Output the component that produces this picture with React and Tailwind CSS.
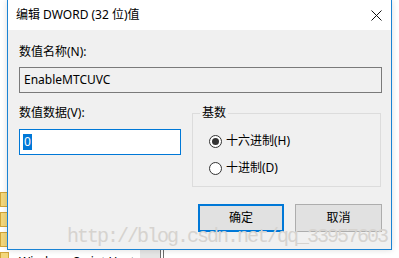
import React from "react";

const ui = "font-['Noto_Sans','Noto_Sans_CJK_SC',sans-serif]";

const Folder = () => (
  <div className="h-[15px] w-[9px] border border-[#d2a63a] bg-[#f3d77c]" />
);

const Radio = ({ checked, label }) => (
  <div className="flex h-[16px] items-center">
    <span className="flex h-[13px] w-[13px] items-center justify-center rounded-full border border-[#333333] bg-white">
      {checked && <span className="h-[7px] w-[7px] rounded-full bg-[#333333]" />}
    </span>
    <span className="ml-[4px] leading-[16px]">{label}</span>
  </div>
);

export default function App() {
  return (
    <div className={`relative h-[258px] w-[399px] overflow-hidden bg-white text-[12px] text-black ${ui}`}>
      {/* window behind the dialog */}
      <div className="absolute inset-0">
        <div className="flex flex-col gap-[5px] pt-[192px]">
          <Folder />
          <Folder />
          <Folder />
          <Folder />
        </div>
        <div className="absolute left-0 top-[250px] flex h-[8px] w-full items-start">
          <span className="ml-[19px] mt-[4px] w-[121px] whitespace-nowrap leading-[16px]">Windows Script Host</span>
          <div className="h-full w-[20px] bg-[#e5e5e5]" />
          <div className="h-full w-px bg-[#6d6d6d]" />
          <div className="ml-[2px] h-full w-px bg-[#6d6d6d]" />
        </div>
      </div>

      {/* dialog */}
      <div className="absolute left-[7px] top-0 flex h-[250px] w-[385px] flex-col border border-t-0 border-[#1a83d4] bg-[#f0f0f0] shadow-[0_0_6px_rgba(0,0,0,0.15)]">
        <div className="flex h-[30px] items-center bg-white pl-[8px]">
          <span className="leading-[16px]">编辑 DWORD (32 位)值</span>
          <svg className="ml-auto mr-[9px]" width="11" height="11" viewBox="0 0 11 11">
            <path d="M0.5 0.5 L10.5 10.5 M10.5 0.5 L0.5 10.5" stroke="#111" strokeWidth="1" fill="none" />
          </svg>
        </div>

        <div className="flex flex-1 flex-col pl-[11px] pt-[14px]">
          <div className="h-[16px] leading-[16px]">数值名称(N):</div>
          <div className="mt-[7px] flex h-[26px] w-[363px] items-center border border-[#7a7a7a] bg-[#f0f0f0] pl-[4px]">
            EnableMTCUVC
          </div>

          <div className="mt-[12px] flex">
            <div className="flex w-[162px] flex-col">
              <div className="h-[16px] leading-[16px]">数值数据(V):</div>
              <div className="mt-[8px] flex h-[26px] items-center border border-[#0078d7] bg-white pl-[3px]">
                <span className="bg-[#0078d7] px-px leading-[16px] text-white">0</span>
              </div>
            </div>
            <fieldset className="ml-[11px] h-[82px] w-[189px] border border-[#dcdcdc] p-0">
              <legend className="ml-[7px] px-[2px] leading-[16px]">基数</legend>
              <div className="flex flex-col gap-[11px] pl-[16px] pt-[12px]">
                <Radio checked label="十六进制(H)" />
                <Radio label="十进制(D)" />
              </div>
            </fieldset>
          </div>

          <div className="mt-[17px] flex gap-[11px] pl-[179px]">
            <button className="flex h-[28px] w-[86px] items-center justify-center border-2 border-[#0078d7] bg-[#e1e1e1]">
              确定
            </button>
            <button className="flex h-[28px] w-[87px] items-center justify-center border border-[#adadad] bg-[#e1e1e1]">
              取消
            </button>
          </div>
        </div>
      </div>

      {/* watermark */}
      <div className="pointer-events-none absolute left-[67px] top-[227px] whitespace-nowrap font-['Liberation_Mono',monospace] text-[20px] leading-[20px] tracking-[-2px] text-[#d6d3cf]">
        http://blog.csdn.net/qq_33957603
      </div>
    </div>
  );
}
